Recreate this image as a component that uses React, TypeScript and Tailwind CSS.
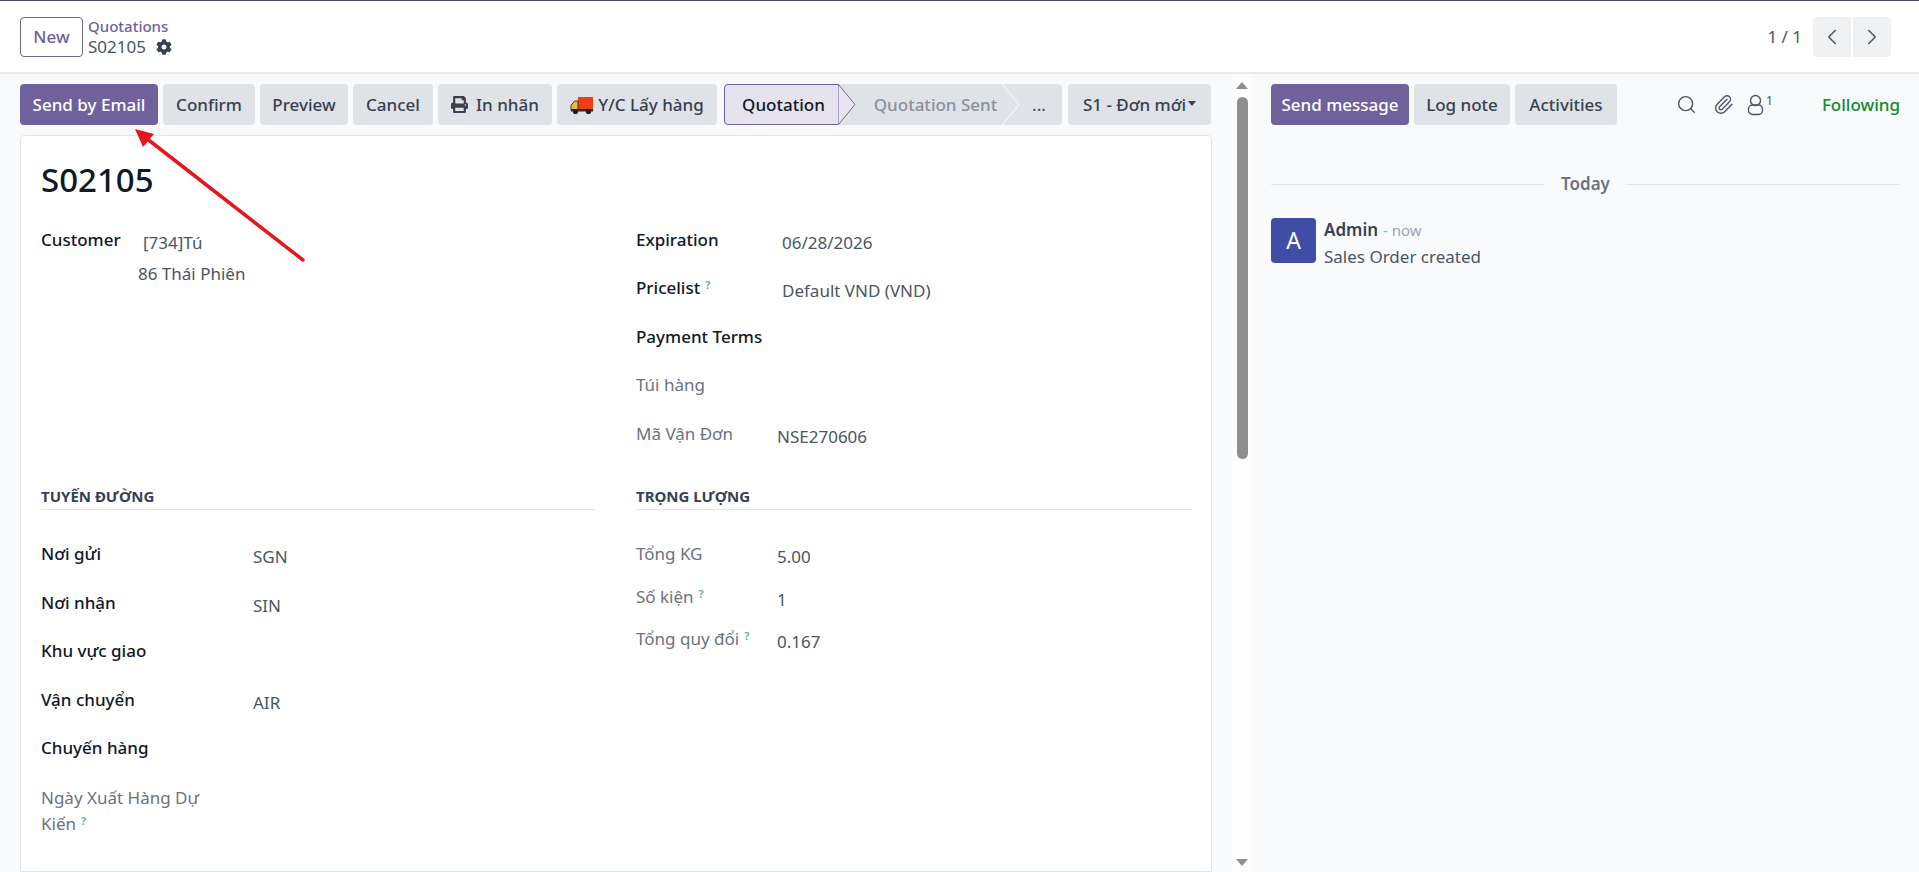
import { ChevronLeft, ChevronRight, Paperclip, Search } from "lucide-react";
import { FaCog, FaPrint } from "react-icons/fa";

const btn = "flex h-[41px] items-center justify-center rounded-[4px] text-[17px] font-medium";
const grayBtn = `${btn} bg-[#dfe2e6] text-[#374151]`;
const purpleBtn = `${btn} bg-[#6f619c] text-white`;

function TruckIcon() {
  return (
    <svg width="24" height="20" viewBox="0 0 24 20" className="shrink-0">
      <rect x="8" y="2" width="15" height="13" fill="#ee3f16" />
      <path d="M8 6H4.5L1 10.5V15.5H8Z" fill="#e8b64a" stroke="#3a3a2a" strokeWidth="1" />
      <rect x="1" y="14" width="22" height="2.5" fill="#2e2e24" />
      <circle cx="5.5" cy="16.5" r="2.6" fill="#1f1f1f" />
      <circle cx="18.5" cy="16.5" r="2.6" fill="#1f1f1f" />
    </svg>
  );
}

function FollowerIcon() {
  return (
    <svg width="17" height="22" viewBox="0 0 17 22" fill="none" stroke="#4b5563" strokeWidth="1.4">
      <circle cx="8.5" cy="6.5" r="5" />
      <rect x="1.5" y="11" width="14" height="9.5" rx="4" />
    </svg>
  );
}

function Help({ className = "" }: { className?: string }) {
  return <sup className={`ml-[5px] text-[11px] font-semibold text-[#5ba7ae] ${className}`}>?</sup>;
}

function Field({
  label,
  value,
  help,
  muted,
  labelW,
  h,
}: {
  label: string;
  value?: string;
  help?: boolean;
  muted?: boolean;
  labelW: string;
  h: string;
}) {
  return (
    <div className={`flex ${h}`}>
      <div
        className={`${labelW} shrink-0 text-[17px] leading-[24px] ${
          muted ? "text-[#6b7280]" : "font-medium text-[#111827]"
        }`}
      >
        {label}
        {help && <Help />}
      </div>
      {value && <div className="pt-[3px] text-[17px] leading-[24px] text-[#4b5563]">{value}</div>}
    </div>
  );
}

function SectionTitle({ children }: { children: string }) {
  return (
    <div className="h-[24px] border-b border-[#e2e5e9] text-[15px] leading-[20px] font-bold text-[#374151]">
      {children}
    </div>
  );
}

function StatusBar() {
  return (
    <div className="relative flex h-[41px] w-[338px] rounded-[4px] bg-[#dfe2e6] text-[17px] font-medium">
      <div className="flex w-[115px] items-center justify-center rounded-l-[4px] border border-[#6f619c] bg-[#e6e3ef] pl-[4px] text-[#111827]">
        Quotation
      </div>
      <svg width="18" height="41" viewBox="0 0 18 41" className="absolute top-0 left-[114px]">
        <path d="M0.5 0.5 L17 20.5 L0.5 40.5" fill="#e9e6f1" stroke="#6f619c" />
      </svg>
      <div className="flex w-[163px] items-center justify-center pl-[30px] text-[#8a919c]">Quotation Sent</div>
      <svg width="18" height="41" viewBox="0 0 18 41" className="absolute top-0 left-[278px]">
        <path d="M0 0 L17 20.5 L0 41" fill="none" stroke="#f1f2f5" strokeWidth="1.5" />
      </svg>
      <div className="flex flex-1 items-center justify-center pl-[14px] text-[#4b5563]">...</div>
    </div>
  );
}

function ActionBar() {
  return (
    <div className="flex items-center">
      <div className="flex gap-[5px]">
        <button className={`${purpleBtn} w-[138px]`}>Send by Email</button>
        <button className={`${grayBtn} w-[92px]`}>Confirm</button>
        <button className={`${grayBtn} w-[88px]`}>Preview</button>
        <button className={`${grayBtn} w-[80px]`}>Cancel</button>
        <button className={`${grayBtn} w-[114px] gap-[8px]`}>
          <FaPrint className="size-[17px]" />
          In nhãn
        </button>
        <button className={`${grayBtn} w-[160px] gap-[4px]`}>
          <TruckIcon />
          Y/C Lấy hàng
        </button>
      </div>
      <div className="ml-[7px]">
        <StatusBar />
      </div>
      <button className={`${grayBtn} ml-[6px] w-[143px] gap-[2px]`}>
        S1 - Đơn mới
        <span className="mb-[3px] border-x-[4.5px] border-t-[5px] border-x-transparent border-t-[#374151]" />
      </button>
    </div>
  );
}

function Sheet() {
  return (
    <div className="mt-[10px] flex-1 rounded-t-[4px] border border-[#e2e5e9] bg-white px-[20px] pt-[22px]">
      <h1 className="text-[33px] leading-[44px] font-medium text-[#111827]">S02105</h1>
      <div className="mt-[26px] grid grid-cols-[554px_556px] gap-x-[41px]">
        <div className="h-[258px]">
          <div className="flex">
            <div className="w-[102px] text-[17px] leading-[24px] font-medium text-[#111827]">Customer</div>
            <div className="pt-[3px] text-[17px] leading-[24px] text-[#4b5563]">[734]Tú</div>
          </div>
          <div className="mt-[7px] pl-[97px] text-[17px] leading-[24px] text-[#4b5563]">86 Thái Phiên</div>
        </div>
        <div className="h-[258px]">
          <Field label="Expiration" value="06/28/2026" labelW="w-[146px]" h="h-[48px]" />
          <Field label="Pricelist" value="Default VND (VND)" help labelW="w-[146px]" h="h-[49px]" />
          <Field label="Payment Terms" labelW="w-[146px]" h="h-[48px]" />
          <Field label="Túi hàng" muted labelW="w-[146px]" h="h-[49px]" />
          <Field label="Mã Vận Đơn" value="NSE270606" muted labelW="w-[141px]" h="h-[48px]" />
        </div>

        <div>
          <SectionTitle>TUYẾN ĐƯỜNG</SectionTitle>
          <div className="mt-[32px]">
            <Field label="Nơi gửi" value="SGN" labelW="w-[212px]" h="h-[49px]" />
            <Field label="Nơi nhận" value="SIN" labelW="w-[212px]" h="h-[48px]" />
            <Field label="Khu vực giao" labelW="w-[212px]" h="h-[49px]" />
            <Field label="Vận chuyển" value="AIR" labelW="w-[212px]" h="h-[48px]" />
            <Field label="Chuyến hàng" labelW="w-[212px]" h="h-[49px]" />
            <div className="w-[180px] text-[17px] leading-[26px] text-[#6b7280]">
              Ngày Xuất Hàng Dự Kiến
              <Help />
            </div>
          </div>
        </div>
        <div>
          <SectionTitle>TRỌNG LƯỢNG</SectionTitle>
          <div className="mt-[32px]">
            <Field label="Tổng KG" value="5.00" muted labelW="w-[141px]" h="h-[43px]" />
            <Field label="Số kiện" value="1" help muted labelW="w-[141px]" h="h-[42px]" />
            <Field label="Tổng quy đổi" value="0.167" help muted labelW="w-[141px]" h="h-[43px]" />
          </div>
        </div>
      </div>
    </div>
  );
}

function Scrollbar() {
  return (
    <div className="flex w-[20px] shrink-0 flex-col items-center bg-[#fdfdfe] pt-[8px]">
      <span className="border-x-[6px] border-b-[7px] border-x-transparent border-b-[#8e8e8e]" />
      <div className="mt-[8px] h-[362px] w-[11px] rounded-[6px] bg-[#8e8e8e]" />
      <span className="mt-auto mb-[6px] border-x-[6px] border-t-[7px] border-x-transparent border-t-[#8e8e8e]" />
    </div>
  );
}

function Chatter() {
  return (
    <div className="flex-1 pt-[10px] pr-[19px] pl-[19px]">
      <div className="flex items-center">
        <div className="flex gap-[5px]">
          <button className={`${purpleBtn} w-[138px]`}>Send message</button>
          <button className={`${grayBtn} w-[96px]`}>Log note</button>
          <button className={`${grayBtn} w-[102px]`}>Activities</button>
        </div>
        <Search className="ml-[59px] size-[21px] text-[#4b5563]" strokeWidth={1.6} />
        <Paperclip className="ml-[16px] size-[21px] text-[#4b5563]" strokeWidth={1.6} />
        <div className="ml-[13px] flex items-start">
          <FollowerIcon />
          <span className="ml-[2px] text-[12px] leading-[14px] text-[#4b5563]">1</span>
        </div>
        <span className="ml-auto text-[17px] font-medium text-[#0f8a2f]">Following</span>
      </div>

      <div className="mt-[47px] flex items-center gap-[17px]">
        <div className="h-px flex-1 bg-[#e2e5e9]" />
        <span className="text-[17px] leading-[24px] font-semibold text-[#6b7280]">Today</span>
        <div className="h-px flex-1 bg-[#e2e5e9]" />
      </div>

      <div className="mt-[22px] flex gap-[8px]">
        <div className="flex h-[45px] w-[45px] items-center justify-center rounded-[4px] bg-[#3f4da6] text-[23px] text-white">
          A
        </div>
        <div>
          <div className="text-[17px] leading-[24px]">
            <span className="font-semibold text-[#374151]">Admin</span>
            <span className="ml-[5px] text-[15px] text-[#9ca3af]">- now</span>
          </div>
          <div className="mt-[2px] text-[17px] leading-[26px] text-[#4b5563]">Sales Order created</div>
        </div>
      </div>
    </div>
  );
}

export default function App() {
  return (
    <div className="flex h-[872px] w-full flex-col overflow-hidden border-t border-[#4a4a5c] bg-[#f9fafc] font-['Noto_Sans','Open_Sans',sans-serif]">
      <header className="flex h-[73px] shrink-0 items-center border-b-2 border-[#e8e9ec] bg-white pr-[28px] pl-[20px]">
        <button className="h-[40px] w-[63px] rounded-[4px] border border-[#6f619c] text-[17px] font-medium text-[#6f619c]">
          New
        </button>
        <div className="ml-[5px]">
          <div className="text-[15px] leading-[20px] font-medium text-[#6f619c]">Quotations</div>
          <div className="flex items-center gap-[10px] text-[17px] leading-[22px] text-[#4b5563]">
            S02105 <FaCog className="size-[16px] text-[#374151]" />
          </div>
        </div>
        <span className="ml-auto text-[17px] text-[#4b5563]">1 / 1</span>
        <div className="ml-[11px] flex gap-[2px]">
          <button className="flex h-[40px] w-[38px] items-center justify-center rounded-l-[4px] bg-[#eff0f2]">
            <ChevronLeft className="size-[26px] text-[#4b5563]" strokeWidth={1.4} />
          </button>
          <button className="flex h-[40px] w-[38px] items-center justify-center rounded-r-[4px] bg-[#eff0f2]">
            <ChevronRight className="size-[26px] text-[#4b5563]" strokeWidth={1.4} />
          </button>
        </div>
      </header>
      <div className="flex min-h-0 flex-1">
        <div className="flex w-[1232px] shrink-0 flex-col pr-[20px] pl-[20px] pt-[10px]">
          <ActionBar />
          <Sheet />
        </div>
        <Scrollbar />
        <Chatter />
      </div>
      {/* annotation arrow drawn over the screenshot */}
      <svg className="pointer-events-none absolute top-0 left-0" width="320" height="270" viewBox="0 0 320 270">
        <path d="M303 260 L146 138" stroke="#e8141c" strokeWidth="3.5" strokeLinecap="round" />
        <path d="M135 129 L154 134 L143 147 Z" fill="#e8141c" />
      </svg>
    </div>
  );
}
